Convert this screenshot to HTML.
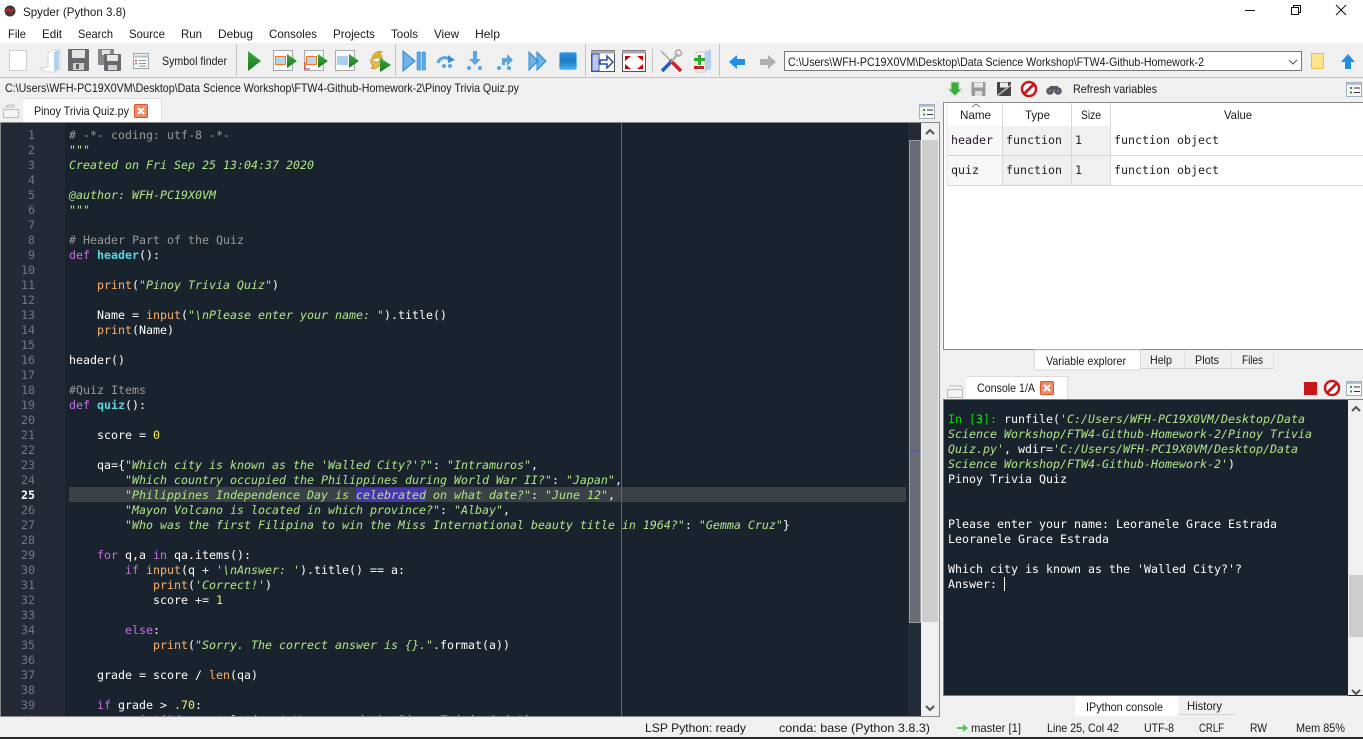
<!DOCTYPE html>
<html><head><meta charset="utf-8"><title>Spyder (Python 3.8)</title>
<style>
html,body{margin:0;padding:0;width:1363px;height:739px;overflow:hidden;background:#f0f0f0}
svg.bg{position:absolute;left:0;top:0}
svg text{font-family:"Liberation Sans",sans-serif;font-size:12px;fill:#1a1a1a;white-space:pre}
svg text.m{font-family:"DejaVu Sans Mono","Liberation Mono",monospace;font-size:11.63px;fill:#222}
pre{position:absolute;margin:0;font-family:"DejaVu Sans Mono","Liberation Mono",monospace;font-size:11.63px;line-height:15px;color:#fff}
.s{color:#b0e686;font-style:italic}.k{color:#c670e0}.b{color:#fab16c}.d{color:#57d6e4;font-weight:bold}.c{color:#999}.n{color:#faed5c}
.sel{background:#4a35b0}
</style></head><body>
<svg class="bg" width="1363" height="739" viewBox="0 0 1363 739">
<defs>
<linearGradient id="g" x1="0" y1="0" x2="0" y2="1"><stop offset="0" stop-color="#3fa83f"/><stop offset="1" stop-color="#137a1e"/></linearGradient>
<linearGradient id="bl" x1="0" y1="0" x2="0" y2="1"><stop offset="0" stop-color="#5ab8f0"/><stop offset="1" stop-color="#1c7fd0"/></linearGradient>
<linearGradient id="st" x1="0" y1="0" x2="0" y2="1"><stop offset="0" stop-color="#2f93dc"/><stop offset="0.5" stop-color="#1f78c4"/><stop offset="1" stop-color="#49b2f2"/></linearGradient>
</defs>
<rect width="1363" height="739" fill="#f0f0f0"/>
<rect width="1363" height="43" fill="#fff"/>
<!-- app icon -->
<circle cx="10" cy="11" r="5.500" fill="#3a3a3a"/><path d="M5 12l3-3 3 3 3-3" stroke="#c8202a" stroke-width="2" fill="none"/>
<text x="23" y="16" textLength="103" lengthAdjust="spacingAndGlyphs">Spyder (Python 3.8)</text>
<!-- window controls -->
<path d="M1245 10.500h10" stroke="#111" fill="none"/>
<path d="M1291.500 7.500h7v7h-7zM1293.500 7.500v-2h7v7h-2" stroke="#111" fill="none"/>
<path d="M1336 5l10 10M1346 5l-10 10" stroke="#111" fill="none"/>
<!-- menu -->
<g>
<text x="8" y="38" textLength="18" lengthAdjust="spacingAndGlyphs">File</text>
<text x="42" y="38" textLength="20" lengthAdjust="spacingAndGlyphs">Edit</text>
<text x="78" y="38" textLength="35" lengthAdjust="spacingAndGlyphs">Search</text>
<text x="129" y="38" textLength="36" lengthAdjust="spacingAndGlyphs">Source</text>
<text x="181" y="38" textLength="21" lengthAdjust="spacingAndGlyphs">Run</text>
<text x="218" y="38" textLength="35" lengthAdjust="spacingAndGlyphs">Debug</text>
<text x="269" y="38" textLength="48" lengthAdjust="spacingAndGlyphs">Consoles</text>
<text x="333" y="38" textLength="42" lengthAdjust="spacingAndGlyphs">Projects</text>
<text x="391" y="38" textLength="27" lengthAdjust="spacingAndGlyphs">Tools</text>
<text x="434" y="38" textLength="25" lengthAdjust="spacingAndGlyphs">View</text>
<text x="475" y="38" textLength="25" lengthAdjust="spacingAndGlyphs">Help</text>
</g>
<!-- toolbar -->
<path d="M236.500 44v33M395.500 44v33M585.500 44v33M652.500 49v24M719.500 44v33" stroke="#c4c4c4"/>
<path d="M0 77.500h1363" stroke="#c4c4c4"/>
<rect x="9.500" y="50.500" width="17" height="20" fill="#fff" stroke="#cfcfcf"/>
<path d="M40 68l8-1v-14l5-3h7v19l-6 3h-8z" fill="#fff" stroke="#d4d4d4"/><path d="M54 52l5-2v19l-5 2z" fill="#b4d0ea"/>
<rect x="68" y="49" width="21" height="22" rx="1" fill="#666a6e"/><rect x="72" y="50" width="13" height="8" fill="#e4e4e4"/><rect x="73" y="63" width="11" height="7" fill="#cfcfcf"/><rect x="76" y="64" width="3" height="5" fill="#666"/>
<rect x="98" y="49" width="16" height="16" fill="#84888c"/><rect x="102" y="50" width="8" height="5" fill="#e4e4e4"/>
<rect x="104" y="54" width="17" height="17" rx="1" fill="#666a6e"/><rect x="107" y="55" width="11" height="6" fill="#e8e8e8"/><rect x="108" y="65" width="9" height="5" fill="#d0d0d0"/>
<rect x="133.500" y="53.500" width="15" height="15" fill="#f8f8f8" stroke="#9aa4ac"/><path d="M133 56.500h16" stroke="#b4bcc4" stroke-width="2"/><path d="M139 60.500h7M139 63.500h7M139 66h7" stroke="#89a"/><path d="M135 60h2v1.500h-2z" fill="#c44"/><path d="M135 63h2v1.500h-2z" fill="#4a4"/>
<text x="162" y="65" textLength="65" lengthAdjust="spacingAndGlyphs">Symbol finder</text>
<path d="M248 51l13 10-13 10z" fill="url(#g)"/>
<rect x="273.500" y="50.500" width="19" height="20" fill="#fafafa" stroke="#aaa"/><rect x="275.500" y="56.500" width="10" height="8" fill="#b8d4ee" stroke="#ee7a2a"/><path d="M287 54l10 7-10 7z" fill="url(#g)"/>
<rect x="304.500" y="50.500" width="19" height="20" fill="#fafafa" stroke="#aaa"/><rect x="306.500" y="56.500" width="10" height="8" fill="#b8d4ee" stroke="#ee7a2a"/><path d="M318 54l10 7-10 7z" fill="url(#g)"/><path d="M305 62v7h5" stroke="#d22" fill="none"/>
<rect x="335.500" y="50.500" width="19" height="20" fill="#fafafa" stroke="#aaa"/><rect x="337" y="56" width="11" height="9" fill="#a8cff2"/><path d="M349 54l10 7-10 7z" fill="url(#g)"/>
<path d="M372 58c1-5 6-8 10-6l-3 2c3 1 4 4 3 7l-3-3c-2-1-4-1-5 1z" fill="#e8b52a" stroke="#b88614" stroke-width="0.700"/>
<path d="M381 62c-1 5-6 8-10 6l3-2c-3-1-4-4-3-7l3 3c2 1 4 1 5-1z" fill="#eec040" stroke="#b88614" stroke-width="0.700"/>
<path d="M380 58l11 7-11 7z" fill="url(#g)"/>
<path d="M403 51l12 10-12 10z" fill="#6bb4ea" stroke="#2a86d2"/><rect x="417" y="52" width="3.500" height="18" fill="#5aa8e4" stroke="#2a86d2" stroke-width="0.500"/><rect x="422" y="52" width="3.500" height="18" fill="#5aa8e4" stroke="#2a86d2" stroke-width="0.500"/>
<path d="M438 63a7 7 0 0 1 12-3" stroke="#5aa4e0" stroke-width="3" fill="none"/><path d="M448 55l7 5-7 3z" fill="#3a8fd8"/><circle cx="444" cy="66" r="2" fill="#5aa4e0"/><circle cx="450" cy="66" r="2" fill="#5aa4e0"/>
<path d="M473 51h4v8h4l-6 6-6-6h4z" fill="#5aa4e0"/><circle cx="469" cy="68" r="2" fill="#5aa4e0"/><circle cx="480" cy="68" r="2" fill="#5aa4e0"/>
<path d="M502 65v-7h5v-4l6 6-6 6v-4h-2v3z" fill="#5aa4e0"/><circle cx="499" cy="68" r="2" fill="#5aa4e0"/><circle cx="509" cy="68" r="2" fill="#5aa4e0"/>
<path d="M529 52l9 9-9 9zM537 52l9 9-9 9z" fill="#6bb4ea" stroke="#2a86d2"/>
<rect x="559.500" y="52.500" width="17" height="17" rx="2" fill="url(#st)" stroke="#6cbcf0"/>
<rect x="591.500" y="50.500" width="23" height="21" fill="#fff" stroke="#555"/><path d="M591 52h24" stroke="#aaa" stroke-width="3"/><rect x="592" y="54" width="7" height="17" fill="#bcc8e8" stroke="#3a5ab8"/><path d="M600 60h7v-4l6 6-6 6v-4h-7z" fill="#fff" stroke="#2a4ca8" stroke-width="1.500"/>
<rect x="622.500" y="50.500" width="23" height="21" fill="#fff" stroke="#555"/><path d="M622 52h24" stroke="#aaa" stroke-width="3"/><path d="M625 56h6l-6 5zM643 56h-6l6 5zM625 69h6l-6-5zM643 69h-6l6-5z" fill="#c00"/>
<path d="M661 51l9 9" stroke="#a8a8a8" stroke-width="1.500"/><path d="M670 60l11 11" stroke="#d02028" stroke-width="3.500"/>
<path d="M678 54l-7 8" stroke="#a8a8a8" stroke-width="2"/><path d="M671 62l-9 9" stroke="#2a5cc0" stroke-width="3.500"/><circle cx="678.500" cy="53" r="3" fill="none" stroke="#aaa" stroke-width="1.500"/>
<path d="M704 52l7-3v20l-7 3z" fill="#b4d0ea"/><rect x="696" y="52" width="9" height="20" fill="#f4f4f4" stroke="#ccc"/><path d="M694 58h4v-3h3v3h4v3h-4v4h-3v-4h-4z" fill="#2ea82e"/><rect x="694" y="66" width="10" height="3" fill="#c8202a"/>
<path d="M729 62l8-7v4h8v6h-8v4z" fill="#1e8ee8"/>
<path d="M776 62l-8-7v4h-8v6h8v4z" fill="#b0b0b0"/>
<rect x="784.500" y="51.500" width="517" height="19" fill="#fff" stroke="#777"/>
<text x="788" y="66" textLength="416" lengthAdjust="spacingAndGlyphs">C:\Users\WFH-PC19X0VM\Desktop\Data Science Workshop\FTW4-Github-Homework-2</text>
<path d="M1289 60l4 4 4-4" stroke="#555" fill="none"/>
<path d="M1311.500 53.500h12v15h-12z" fill="#fbe58a" stroke="#e8c04a"/>
<path d="M1348 54l7 8h-4v7h-6v-7h-4z" fill="#1e8ee8"/>
<!-- path row -->
<text x="5" y="92" textLength="514" lengthAdjust="spacingAndGlyphs">C:\Users\WFH-PC19X0VM\Desktop\Data Science Workshop\FTW4-Github-Homework-2\Pinoy Trivia Quiz.py</text>
<!-- printer icon left -->
<path d="M6 107h8v-2h-6zM3.500 109.500h15v8h-15z" fill="#f4f4f4" stroke="#bbb"/>
<rect x="23" y="98" width="138" height="24" fill="#fff"/><path d="M23 98.500h138M161.500 98v24" stroke="#ddd"/>
<text x="34" y="115" textLength="95" lengthAdjust="spacingAndGlyphs">Pinoy Trivia Quiz.py</text>
<rect x="134.500" y="104.500" width="13" height="13" rx="1" fill="#ee8a6a" stroke="#d8582c"/><path d="M138 108l6 6M144 108l-6 6" stroke="#fff" stroke-width="2"/>
<rect x="919.500" y="104.500" width="15" height="14" fill="#f8f8f8" stroke="#9fb0c0"/><rect x="920" y="105" width="14" height="2" fill="#b4c2ce"/><path d="M923 109h2v2h-2zM923 113.500h2v2h-2z" fill="#2a9a3a"/><path d="M927 110h6M927 114.500h6" stroke="#333"/>
<!-- editor frame -->
<rect x="0" y="122" width="940" height="595" fill="#8a8a8a"/>
<rect x="1" y="123" width="938" height="593" fill="#19232d"/>
<rect x="1" y="123" width="64" height="593" fill="#232a35"/>
<rect x="69" y="487" width="837" height="15" fill="#3a4248"/>
<rect x="908" y="123" width="13" height="593" fill="#232b36"/>
<rect x="909.500" y="140.500" width="11" height="482" fill="#686c74" stroke="#9a9ea2"/>
<rect x="910" y="450" width="10" height="3" fill="#5c6490"/>
<rect x="921" y="123" width="18" height="593" fill="#f0f0f0"/>
<rect x="922" y="140" width="16" height="482" fill="#cdcdcd"/>
<path d="M926 134l4-4 4 4" stroke="#555" stroke-width="2" fill="none"/>
<path d="M926 706l4 4 4-4" stroke="#555" stroke-width="2" fill="none"/>
<!-- variable explorer toolbar -->
<path d="M951 82h8v7h3l-7 7-7-7h3z" fill="#38b038" stroke="#c8d8c8"/>
<rect x="971.500" y="82" width="14" height="14" rx="1" fill="#9a9a9a"/><rect x="974" y="82.500" width="9" height="5" fill="#e8e8e8"/><rect x="975" y="91" width="7" height="5" fill="#ddd"/>
<rect x="997" y="82" width="14" height="14" rx="1" fill="#444"/><rect x="1000" y="82.500" width="8" height="5" fill="#eee"/><path d="M997 96l14-11" stroke="#bbb" stroke-width="1.500"/>
<circle cx="1029" cy="89" r="7" fill="#fff" stroke="#c8181c" stroke-width="2.500"/><path d="M1024 94l10-10" stroke="#c8181c" stroke-width="3"/>
<circle cx="1050" cy="91" r="3.800" fill="#555a60"/><circle cx="1058" cy="91" r="3.800" fill="#555a60"/><rect x="1050" y="86" width="8" height="4" fill="#555a60"/><circle cx="1050" cy="91" r="1.500" fill="#8a5aa0"/><circle cx="1058" cy="91" r="1.500" fill="#8a5aa0"/>
<text x="1073" y="93" textLength="84" lengthAdjust="spacingAndGlyphs">Refresh variables</text>
<rect x="1346.500" y="82.500" width="15" height="14" fill="#f8f8f8" stroke="#9fb0c0"/><rect x="1347" y="83" width="14" height="2" fill="#b4c2ce"/><path d="M1350 87h2v2h-2zM1350 91.500h2v2h-2z" fill="#2a9a3a"/><path d="M1354 88h6M1354 92.500h6" stroke="#333"/>
<!-- table -->
<rect x="943.500" y="102.500" width="421" height="247" fill="#fff" stroke="#8a8a8a"/>
<rect x="947" y="126" width="55" height="59" fill="#f7f7f7"/><rect x="1003" y="126" width="68" height="59" fill="#f0f0f0"/><rect x="1072" y="126" width="38" height="59" fill="#f0f0f0"/>
<path d="M1002.500 103v82M1071.500 103v82M1110.500 103v82" stroke="#d8d8d8"/>
<path d="M947 155.500h416M947 185.500h416" stroke="#d8d8d8"/>
<path d="M947 103v82" stroke="#e4e4e4"/>
<path d="M972 107l4-3 4 3" stroke="#777" fill="none"/>
<text x="960" y="119" textLength="31" lengthAdjust="spacingAndGlyphs">Name</text>
<text x="1025" y="119" textLength="25" lengthAdjust="spacingAndGlyphs">Type</text>
<text x="1081" y="119" textLength="20" lengthAdjust="spacingAndGlyphs">Size</text>
<text x="1224" y="119" textLength="28" lengthAdjust="spacingAndGlyphs">Value</text>
<text class="m" x="951" y="144" style="fill:#241028">header</text><text class="m" x="1006" y="144">function</text><text class="m" x="1075" y="144">1</text><text class="m" x="1114" y="144">function object</text>
<text class="m" x="951" y="174">quiz</text><text class="m" x="1006" y="174">function</text><text class="m" x="1075" y="174">1</text><text class="m" x="1114" y="174">function object</text>
<!-- upper tabs -->
<path d="M1140 368.500h134" stroke="#d4d4d4"/>
<path d="M1184.500 350v18M1231.500 350v18M1273.500 350v18" stroke="#e2e2e2"/>
<rect x="1034.500" y="350" width="106" height="20" fill="#fff" stroke="#d8d8d8"/>
<text x="1046" y="365" textLength="80" lengthAdjust="spacingAndGlyphs">Variable explorer</text>
<text x="1150" y="364" textLength="22" lengthAdjust="spacingAndGlyphs">Help</text>
<text x="1195" y="364" textLength="24" lengthAdjust="spacingAndGlyphs">Plots</text>
<text x="1242" y="364" textLength="21" lengthAdjust="spacingAndGlyphs">Files</text>
<!-- console header -->
<path d="M949 386h12l2 2M947.500 389.500h15v8h-15z" fill="#f4f4f4" stroke="#bbb"/>
<rect x="966" y="376" width="101" height="23" fill="#fff"/><path d="M966 376.500h101M1067.500 376v23" stroke="#ddd"/>
<text x="977" y="392" textLength="58" lengthAdjust="spacingAndGlyphs">Console 1/A</text>
<rect x="1040.500" y="381.500" width="13" height="13" rx="1" fill="#ee8a6a" stroke="#d8582c"/><path d="M1044 385l6 6M1050 385l-6 6" stroke="#fff" stroke-width="2"/>
<rect x="1304" y="382" width="13" height="13" fill="#c8181c"/>
<circle cx="1332" cy="388" r="7" fill="#fff" stroke="#c8181c" stroke-width="2.500"/><path d="M1327 393l10-10" stroke="#c8181c" stroke-width="3"/>
<rect x="1346.500" y="381.500" width="15" height="14" fill="#f8f8f8" stroke="#9fb0c0"/><rect x="1347" y="382" width="14" height="2" fill="#b4c2ce"/><path d="M1350 386h2v2h-2zM1350 390.500h2v2h-2z" fill="#2a9a3a"/><path d="M1354 387h6M1354 391.500h6" stroke="#333"/>
<!-- console -->
<rect x="943" y="399" width="420" height="297" fill="#19232d"/>
<path d="M943.500 399v297M943 399.500h420M943 695.500h405" stroke="#3a8cc8"/>
<rect x="1348" y="400" width="15" height="295" fill="#f0f0f0"/>
<rect x="1349" y="575" width="14" height="62" fill="#cdcdcd"/>
<path d="M1352 411l4-4 4 4" stroke="#555" stroke-width="2" fill="none"/>
<path d="M1352 690l4 4 4-4" stroke="#555" stroke-width="2" fill="none"/>
<path d="M1004.500 577v14" stroke="#fff"/>
<!-- bottom tabs -->
<path d="M1178 714.500h57" stroke="#d4d4d4"/>
<rect x="1075" y="696" width="103" height="20" fill="#fff"/>
<text x="1086" y="711" textLength="77" lengthAdjust="spacingAndGlyphs">IPython console</text>
<text x="1187" y="710" textLength="35" lengthAdjust="spacingAndGlyphs">History</text>
<!-- status -->
<text x="645" y="732" textLength="101" lengthAdjust="spacingAndGlyphs">LSP Python: ready</text>
<text x="779" y="732" textLength="151" lengthAdjust="spacingAndGlyphs">conda: base (Python 3.8.3)</text>
<path d="M957 727h6v-3l5 4-5 4v-3h-6z" fill="#4cc84c"/>
<text x="971" y="732" textLength="50" lengthAdjust="spacingAndGlyphs">master [1]</text>
<text x="1047" y="732" textLength="72" lengthAdjust="spacingAndGlyphs">Line 25, Col 42</text>
<text x="1144" y="732" textLength="30" lengthAdjust="spacingAndGlyphs">UTF-8</text>
<text x="1199" y="732" textLength="25" lengthAdjust="spacingAndGlyphs">CRLF</text>
<text x="1250" y="732" textLength="17" lengthAdjust="spacingAndGlyphs">RW</text>
<text x="1296" y="732" textLength="49" lengthAdjust="spacingAndGlyphs">Mem 85%</text>
<rect x="0" y="737" width="1363" height="2" fill="#2a2a2a"/>
</svg>

<div style="position:absolute;left:1px;top:123px;width:907px;height:593px;overflow:hidden">
<pre style="left:0;top:5px;width:34px;text-align:right;color:#6f7a84">1
2
3
4
5
6
7
8
9
10
11
12
13
14
15
16
17
18
19
20
21
22
23
24
<b style="color:#fff">25</b>
26
27
28
29
30
31
32
33
34
35
36
37
38
39
40</pre>
<pre style="left:68px;top:5px"><span class="c"># -*- coding: utf-8 -*-</span>
<span class="s">"""</span>
<span class="s">Created on Fri Sep 25 13:04:37 2020</span>

<span class="s">@author: WFH-PC19X0VM</span>
<span class="s">"""</span>

<span class="c"># Header Part of the Quiz</span>
<span class="k">def</span> <span class="d">header</span>():

    <span class="b">print</span>(<span class="s">"Pinoy Trivia Quiz"</span>)

    Name = <span class="b">input</span>(<span class="s">"\nPlease enter your name: "</span>).title()
    <span class="b">print</span>(Name)

header()

<span class="c">#Quiz Items</span>
<span class="k">def</span> <span class="d">quiz</span>():

    score = <span class="n">0</span>

    qa={<span class="s">"Which city is known as the 'Walled City?'?"</span>: <span class="s">"Intramuros"</span>,
        <span class="s">"Which country occupied the Philippines during World War II?"</span>: <span class="s">"Japan"</span>,
        <span class="s">"Philippines Independence Day is <span class="sel">celebrated</span> on what date?"</span>: <span class="s">"June 12"</span>,
        <span class="s">"Mayon Volcano is located in which province?"</span>: <span class="s">"Albay"</span>,
        <span class="s">"Who was the first Filipina to win the Miss International beauty title in 1964?"</span>: <span class="s">"Gemma Cruz"</span>}

    <span class="k">for</span> q,a <span class="k">in</span> qa.items():
        <span class="k">if</span> <span class="b">input</span>(q + <span class="s">'\nAnswer: '</span>).title() == a:
            <span class="b">print</span>(<span class="s">'Correct!'</span>)
            score += <span class="n">1</span>

        <span class="k">else</span>:
            <span class="b">print</span>(<span class="s">"Sorry. The correct answer is {}."</span>.format(a))

    grade = score / <span class="b">len</span>(qa)

    <span class="k">if</span> grade &gt; <span class="n">.70</span>:
        <span class="b">print</span>(<span class="s">"Congratulations! You passed the Pinoy Trivia Quiz"</span>)</pre>
<div style="position:absolute;left:620px;top:0;width:1px;height:593px;background:#5f6972"></div>
</div>

<pre style="left:948px;top:412px;width:400px"><span style="color:#00e000">In [</span><span style="color:#00ff00">3</span><span style="color:#00e000">]: </span>runfile(<span class="s">'C:/Users/WFH-PC19X0VM/Desktop/Data
Science Workshop/FTW4-Github-Homework-2/Pinoy Trivia
Quiz.py'</span>, wdir=<span class="s">'C:/Users/WFH-PC19X0VM/Desktop/Data
Science Workshop/FTW4-Github-Homework-2'</span>)
Pinoy Trivia Quiz


Please enter your name: Leoranele Grace Estrada
Leoranele Grace Estrada

Which city is known as the 'Walled City?'?
Answer: </pre>
</body></html>
